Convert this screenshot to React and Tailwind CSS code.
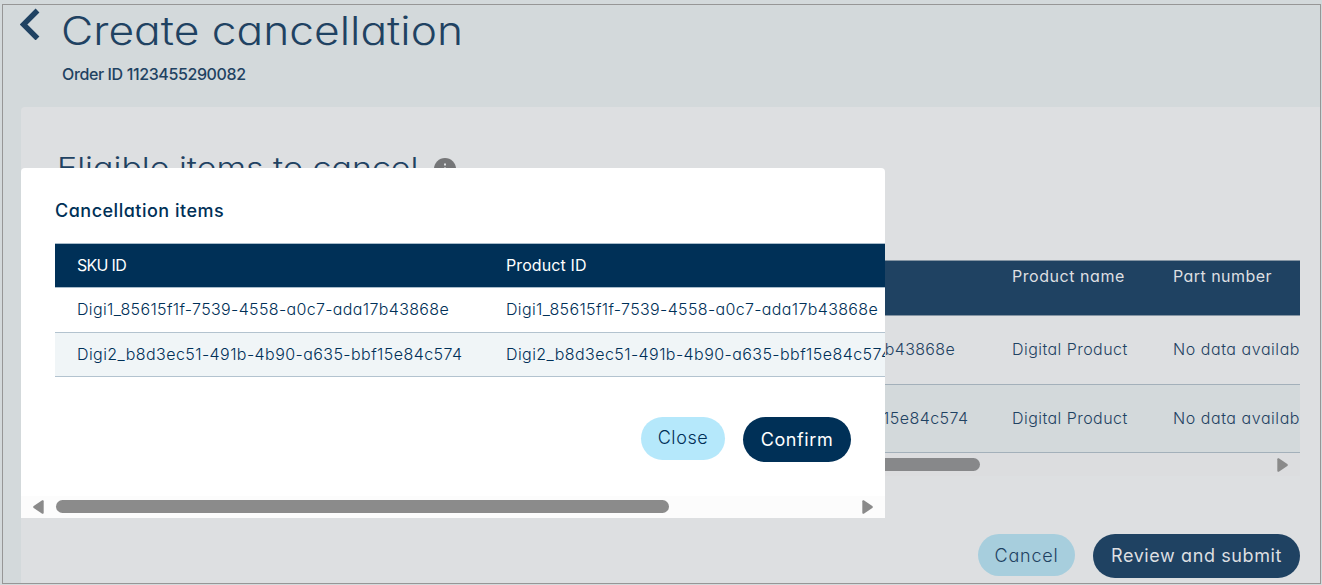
import React from 'react';

const items = [
  { id: 'Digi1_85615f1f-7539-4558-a0c7-ada17b43868e', track: 'tracking-[0.35px]' },
  { id: 'Digi2_b8d3ec51-491b-4b90-a635-bbf15e84c574', track: 'tracking-[0.43px]' },
];

function Arrow({ left }) {
  return (
    <svg width="11" height="14" viewBox="0 0 11 14" className={left ? 'rotate-180' : ''}>
      <path d="M1.8 .3 L10.3 6 Q11.4 7 10.3 8 L1.8 13.7 Q.3 14.3 .3 12.8 V1.2 Q.3 -.3 1.8 .3Z" fill="#8a8a8a" />
    </svg>
  );
}

function MainTable() {
  return (
    <div className="ml-[36px] mt-[78px] w-[1243px] overflow-hidden">
      <div className="flex h-[56px] w-[1400px] border-y border-[#8595a3] bg-[#1f4262] pl-[955px] pt-[2px] text-[16px] leading-[26px] text-[#dddfe1]">
        <div className="w-[161px] tracking-[0.55px]">Product name</div>
        <div className="tracking-[0.45px]">Part number</div>
      </div>
      {items.map((it, i) => (
        <div
          key={it.id}
          className={`flex w-[1400px] items-center border-b border-[#a3b0ba] pl-[526px] text-[16px] font-light text-[#1f4262] ${i ? 'h-[68px] bg-[#d3d9db] pb-px' : 'h-[69px] pb-[3px]'}`}
        >
          <div className={`w-[429px] whitespace-nowrap ${it.track}`}>{it.id}</div>
          <div className="w-[161px] tracking-[0.45px]">Digital Product</div>
          <div className="whitespace-nowrap tracking-[0.55px]">No data available</div>
        </div>
      ))}
      <div className="flex h-[23px] items-center justify-between bg-[#dcdddf] pr-[12px]">
        <div className="h-[13px] w-[923px] rounded-full bg-[#87888a]" />
        <Arrow />
      </div>
    </div>
  );
}

function Modal() {
  return (
    <div className="absolute left-[21px] top-[168px] flex h-[350px] w-[864px] flex-col overflow-hidden rounded-t-[4px] bg-white text-[#003057]">
      <h3 className="ml-[34px] mt-[29px] h-[28px] text-[18px] font-medium leading-[27px] tracking-[0.5px]">Cancellation items</h3>
      <div className="ml-[34px] mt-[18px] w-[900px]">
        <div className="flex h-[45px] items-center border-y border-[#a9bccb] bg-[#003057] pb-[2px] pl-[22px] text-[16px] text-white">
          <div className="w-[429px] tracking-[-0.7px]">SKU ID</div>
          <div className="tracking-[0.1px]">Product ID</div>
        </div>
        {items.map((it, i) => (
          <div
            key={it.id}
            className={`flex items-center border-b border-[#b3c3cf] pb-[2px] pl-[22px] text-[16px] font-light ${i ? 'h-[44px] bg-[#f0f5f7]' : 'h-[45px]'}`}
          >
            <div className={`w-[429px] whitespace-nowrap ${it.track}`}>{it.id}</div>
            <div className={`whitespace-nowrap ${it.track}`}>{it.id}</div>
          </div>
        ))}
      </div>
      <div className="mr-[34px] mt-[40px] flex items-start justify-end gap-[18px] text-[18px] tracking-[0.6px]">
        <button className="h-[43px] w-[84px] rounded-full bg-[#b5e8fb] pb-[2px] font-light leading-[40px]">Close</button>
        <button className="h-[45px] w-[108px] rounded-full bg-[#003057] leading-[44px] text-white">Confirm</button>
      </div>
      <div className="mt-auto flex h-[22px] items-center bg-[#fcfcfc] pl-[12px] pr-[12px]">
        <Arrow left />
        <div className="mb-px ml-[12px] h-[13px] w-[613px] rounded-full bg-[#8b8b8b]" />
        <div className="ml-auto"><Arrow /></div>
      </div>
    </div>
  );
}

export default function App() {
  return (
    <div className="relative h-[585px] w-[1322px] overflow-hidden bg-[#d3d9db] pl-[2px] pt-[4px] font-['Inter','Liberation_Sans',sans-serif] text-[#1f4262] [font-feature-settings:'cv11']">
      <div className="h-[580px] w-[1319px] overflow-hidden border border-[#969696]">
        <header className="flex h-[102px]">
          <svg width="20" height="32" viewBox="0 0 20 32" className="ml-[17px] mt-[3px] shrink-0">
            <path d="M17.5 2.5 L3.5 16.5 L17.5 30.5" fill="none" stroke="#1f4262" strokeWidth="5.4" />
          </svg>
          <div className="ml-[21px]">
            <h1 className="h-[51px] w-[352px] origin-left scale-x-[1.136] whitespace-nowrap text-[39px] font-light leading-[52px]">Create cancellation</h1>
            <p className="ml-px mt-[6px] text-[16px] font-medium leading-[24px] tracking-[-0.38px]">Order ID 1123455290082</p>
          </div>
        </header>
        <main className="ml-[18px] h-[480px] rounded-tl-[4px] bg-[#dddfe1] pt-px">
          <div className="flex h-[74px] items-end pl-[36px]">
            <h2 className="w-[360px] origin-left scale-x-[1.17] whitespace-nowrap text-[29px] font-light leading-[29px]">Eligible items to cancel</h2>
            <svg width="22" height="22" viewBox="0 0 22 22" className="mb-[2px] ml-[17px]">
              <circle cx="11" cy="11" r="11" fill="#757678" />
              <path d="M11 5.5v2M11 9.5v7" stroke="#dddfe1" strokeWidth="2" />
            </svg>
          </div>
          <MainTable />
          <div className="mr-[19px] mt-[58px] flex justify-end gap-[18px] pr-px text-[18px]">
            <button className="h-[42px] w-[97px] rounded-full bg-[#a7cedd] font-light leading-[43px] tracking-[0.8px]">Cancel</button>
            <button className="h-[44px] w-[207px] rounded-full bg-[#1f4262] leading-[44px] tracking-[0.6px] text-[#dddfe1]">Review and submit</button>
          </div>
        </main>
      </div>
      <Modal />
    </div>
  );
}
